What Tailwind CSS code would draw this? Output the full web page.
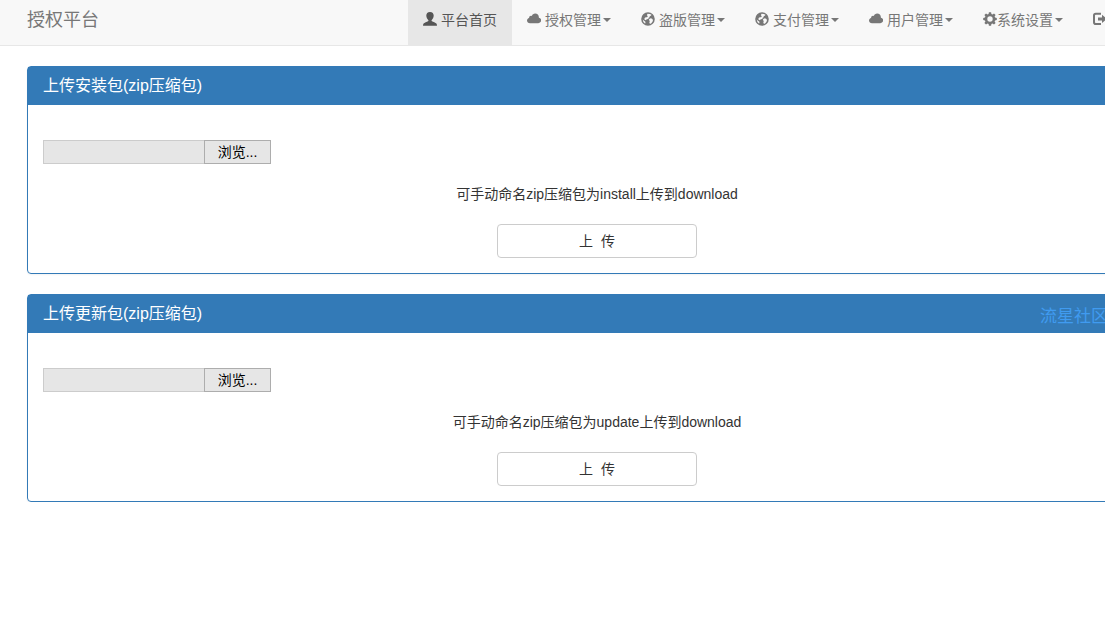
<!DOCTYPE html>
<html lang="zh-CN">
<head>
    <meta charset="UTF-8">
    <meta name="viewport" content="width=device-width, initial-scale=1.0">
    <title>授权平台</title>
    <script src="https://cdn.jsdelivr.net/npm/@tailwindcss/browser@4"></script>
</head>
<body class="bg-white text-[#333] text-sm leading-5 overflow-x-hidden font-['Liberation_Sans','Noto_Sans_CJK_SC',sans-serif]">

    <!-- Icons -->
    <svg class="hidden">
        <symbol id="icon-user" viewBox="0 0 14 14">
            <path d="M7 0C4.500 0 3.300 1.500 3.300 3.600c0 1.800.8 3.400 1.900 4.300.4.400.3 1-.2 1.300C4 9.900 1.300 10.700.6 11.600.2 12.200 0 13 0 13.800h14c0-.8-.2-1.600-.6-2.200-.7-.9-3.400-1.700-4.400-2.400-.5-.3-.6-.9-.2-1.300 1.100-.9 1.900-2.500 1.900-4.300C10.700 1.500 9.500 0 7 0z"/>
        </symbol>
        <symbol id="icon-cloud" viewBox="0 0 14 14">
            <path d="M3 11.200C1.300 11.200 0 10 0 8.500 0 7.200.9 6.200 2.100 5.900c-.1-1.300.8-2.200 1.900-2.200.3 0 .6.100.9.200C5.400 2.500 6.600 1.600 8.100 1.600c2.200 0 3.800 1.700 3.800 3.800v.3c1.200.2 2.300 1.200 2.300 2.600 0 1.600-1.400 2.900-3.100 2.900z"/>
        </symbol>
        <symbol id="icon-globe" viewBox="0 0 14 14">
            <path fill-rule="evenodd" d="M7 .2a6.800 6.800 0 1 0 0 13.600A6.800 6.800 0 0 0 7 .2zM6.500 1.700l2.400.2 1.600.9-.6 1-1.300.2.3 1-1.200.8-.4 1.200-1.600.2-.8 1-1.500-.6.200-1.500 1.200-.9 1.300.1.700-1.100-.9-.9zM8.300 7l1.500-.8 1.300.6.9 1.100-.5 1.800-1.200 1.500-1.300.8-.7-1.600.5-1.300-.9-1zM1.700 7.500l1.300 1.300 1.200.8.3 1.500-.5.500A5.500 5.500 0 0 1 1.700 7.500z"/>
        </symbol>
        <symbol id="icon-cog" viewBox="0 0 14 14">
            <path fill-rule="evenodd" d="M5.900.2h2.200l.3 1.700 1.100.5 1.500-1 1.600 1.600-1 1.500.5 1.100 1.700.3v2.200l-1.700.3-.5 1.100 1 1.500-1.600 1.600-1.500-1-1.100.5-.3 1.700H5.900l-.3-1.700-1.100-.5-1.500 1L1.400 11l1-1.500-.5-1.100L.2 8.100V5.900l1.700-.3.5-1.100-1-1.500L3 1.400l1.500 1 1.100-.5zM7 4.300a2.700 2.700 0 1 0 0 5.400 2.700 2.700 0 0 0 0-5.400z"/>
        </symbol>
        <symbol id="icon-logout" viewBox="0 0 14 14">
            <path d="M8 .8H2.800A2.800 2.800 0 0 0 0 3.600v6.600A2.800 2.800 0 0 0 2.800 13H8v-2H3c-.6 0-1-.4-1-1V3.800c0-.6.400-1 1-1h5zM9 2.800l5 4.100-5 4.100V8.400H5V5.400h4z"/>
        </symbol>
    </svg>

    <nav class="bg-[#f8f8f8] border-b border-[#e7e7e7] text-[#777]">
        <div class="flex items-stretch justify-between w-[1170px] ml-3">
            <a href="#" class="text-lg leading-5 px-[15px] py-[10px]">授权平台</a>
            <ul class="flex whitespace-nowrap">
                <li>
                    <a href="#" class="flex items-center h-[45px] pb-[5px] px-[15px] bg-[#e7e7e7] text-[#555]">
                        <svg class="size-3.5 mr-1 mb-0.5 fill-current"><use href="#icon-user"/></svg>平台首页
                    </a>
                </li>
                <li>
                    <a href="#" class="flex items-center h-[45px] pb-[5px] px-[15px]">
                        <svg class="size-3.5 mr-1 mb-0.5 fill-current"><use href="#icon-cloud"/></svg>授权管理
                        <span class="ml-0.5 border-4 border-b-0 border-x-transparent border-t-current"></span>
                    </a>
                </li>
                <li>
                    <a href="#" class="flex items-center h-[45px] pb-[5px] px-[15px]">
                        <svg class="size-3.5 mr-1 mb-0.5 fill-current"><use href="#icon-globe"/></svg>盗版管理
                        <span class="ml-0.5 border-4 border-b-0 border-x-transparent border-t-current"></span>
                    </a>
                </li>
                <li>
                    <a href="#" class="flex items-center h-[45px] pb-[5px] px-[15px]">
                        <svg class="size-3.5 mr-1 mb-0.5 fill-current"><use href="#icon-globe"/></svg>支付管理
                        <span class="ml-0.5 border-4 border-b-0 border-x-transparent border-t-current"></span>
                    </a>
                </li>
                <li>
                    <a href="#" class="flex items-center h-[45px] pb-[5px] px-[15px]">
                        <svg class="size-3.5 mr-1 mb-0.5 fill-current"><use href="#icon-cloud"/></svg>用户管理
                        <span class="ml-0.5 border-4 border-b-0 border-x-transparent border-t-current"></span>
                    </a>
                </li>
                <li>
                    <a href="#" class="flex items-center h-[45px] pb-[5px] px-[15px]">
                        <svg class="size-3.5 mb-0.5 fill-current"><use href="#icon-cog"/></svg>系统设置
                        <span class="ml-0.5 border-4 border-b-0 border-x-transparent border-t-current"></span>
                    </a>
                </li>
                <li>
                    <a href="#" aria-label="退出" class="flex items-center w-[104px] h-[45px] pb-[5px] px-[15px]">
                        <svg class="size-3.5 mb-0.5 fill-current"><use href="#icon-logout"/></svg>
                    </a>
                </li>
            </ul>
        </div>
    </nav>

    <main class="w-[1170px] ml-3 px-[15px] pt-5 flex flex-col gap-5">
        <section class="border border-[#337ab7] rounded shadow-xs">
            <h3 class="bg-[#337ab7] text-white text-base leading-[18px] px-[15px] py-[10px]">上传安装包(zip压缩包)</h3>
            <form class="px-[15px] pt-[35px] pb-[15px] flex flex-col gap-5">
                <div class="flex h-6">
                    <input type="text" readonly aria-label="安装包文件" class="w-[161px] bg-[#e6e6e6] border border-r-0 border-[#ccc] px-1">
                    <button type="button" onclick="document.getElementById('file-install').click()" class="w-[67px] bg-[#e6e6e6] border border-[#adadad] text-black leading-5">浏览...</button>
                    <input type="file" id="file-install" aria-label="安装包文件" class="hidden" onchange="this.parentNode.firstElementChild.value = this.files[0].name">
                </div>
                <p class="text-center">可手动命名zip压缩包为install上传到download</p>
                <button type="submit" class="self-center w-[200px] h-[34px] border border-[#ccc] rounded whitespace-pre">上  传</button>
            </form>
        </section>

        <section class="relative border border-[#337ab7] rounded shadow-xs">
            <h3 class="bg-[#337ab7] text-white text-base leading-[18px] px-[15px] py-[10px]">上传更新包(zip压缩包)</h3>
            <span class="absolute top-3 left-[1012px] text-[17px] leading-5 text-[#409bf0] whitespace-nowrap">流星社区</span>
            <form class="px-[15px] pt-[35px] pb-[15px] flex flex-col gap-5">
                <div class="flex h-6">
                    <input type="text" readonly aria-label="更新包文件" class="w-[161px] bg-[#e6e6e6] border border-r-0 border-[#ccc] px-1">
                    <button type="button" onclick="document.getElementById('file-update').click()" class="w-[67px] bg-[#e6e6e6] border border-[#adadad] text-black leading-5">浏览...</button>
                    <input type="file" id="file-update" aria-label="更新包文件" class="hidden" onchange="this.parentNode.firstElementChild.value = this.files[0].name">
                </div>
                <p class="text-center">可手动命名zip压缩包为update上传到download</p>
                <button type="submit" class="self-center w-[200px] h-[34px] border border-[#ccc] rounded whitespace-pre">上  传</button>
            </form>
        </section>
    </main>

</body>
</html>
